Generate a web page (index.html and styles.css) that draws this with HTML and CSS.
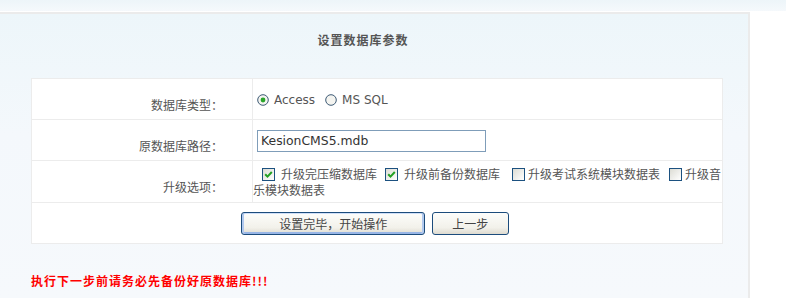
FILE: index.html
```html
<!DOCTYPE html>
<html lang="zh-CN">
  <head>
    <meta charset="UTF-8" />
    <title>设置数据库参数</title>
    <link rel="stylesheet" href="styles.css">
  </head>
  <body>
    <div class="topbar"></div>
    <div class="panel">
      <div class="title">设置数据库参数</div>

      <table class="form">
        <tr>
          <td class="lbl">数据库类型：</td>
          <td class="val">
            <label class="radio"><svg class="rb" width="12" height="12" viewBox="0 0 12 12"><circle cx="6" cy="6" r="5.3" fill="#f4f4f0" stroke="#3d5a75" /><circle cx="6" cy="6" r="2.4" fill="#2aa52a" /></svg>Access</label><label class="radio"><svg class="rb" width="12" height="12" viewBox="0 0 12 12"><circle cx="6" cy="6" r="5.3" fill="#f4f4f0" stroke="#3d5a75" /></svg>MS SQL</label>
          </td>
        </tr>
        <tr>
          <td class="lbl">原数据库路径：</td>
          <td class="val">
            <input class="path" type="text" value="KesionCMS5.mdb" />
          </td>
        </tr>
        <tr>
          <td class="lbl">升级选项：</td>
          <td class="val opts"><label class="opt first"><span class="cb on"><svg width="11" height="11" viewBox="0 0 11 11"><path d="M2.2 5.2 L4.5 7.6 L8.8 3" fill="none" stroke="#22a022" stroke-width="2" /></svg></span>升级完压缩数据库</label><label class="opt"><span class="cb on"><svg width="11" height="11" viewBox="0 0 11 11"><path d="M2.2 5.2 L4.5 7.6 L8.8 3" fill="none" stroke="#22a022" stroke-width="2" /></svg></span>升级前备份数据库</label><label class="opt wide"><span class="cb"></span>升级考试系统模块数据表</label><label class="opt"><span class="cb"></span>升级音乐模块数据表</label></td>
        </tr>
        <tr>
          <td class="btns" colspan="2">
            <button class="btn start">设置完毕，开始操作</button>
            <button class="btn prev">上一步</button>
          </td>
        </tr>
      </table>

      <p class="warn">执行下一步前请务必先备份好原数据库!!!</p>
    </div>
  </body>
</html>
```

FILE: styles.css
```css
body {
  margin: 0;
  background: #fff;
  color: #555;
  font-family: "Noto Sans CJK SC", sans-serif;
  font-size: 12px;
}

.topbar {
  height: 11px;
  background: linear-gradient(#edf5f9, #f5f9fc);
  margin-bottom: 1px;
}

.panel {
  width: 748px;
  height: 284px;
  overflow: hidden;
  border-top: 2px solid #ebebeb;
  border-right: 2px solid #ebebeb;
  background: linear-gradient(#edf6fa, #f4f8fc 120px, #f6f9fc);
}

.title {
  width: 726px;
  padding-top: 16px;
  line-height: 20px;
  text-align: center;
  font-weight: bold;
  letter-spacing: 1px;
  color: #555;
}

.form {
  margin: 28px 0 0 31px;
  width: 692px;
  border-collapse: collapse;
  background: #fff;
}

.form td {
  height: 40px;
  padding: 0;
  border: 1px solid #ececec;
}

.lbl {
  width: 221px;
  padding: 10px 29px 0 0 !important;
  text-align: right;
  vertical-align: middle;
  box-sizing: border-box;
}

.val {
  vertical-align: middle;
}

.radio {
  display: inline-flex;
  align-items: center;
  margin-top: 3px;
  font-family: "DejaVu Sans", sans-serif;
}

.rb {
  margin: 0 5px 0 4px;
}

.radio + .radio .rb {
  margin-left: 10px;
}

.path {
  margin: 1px 0 0 4px;
  width: 229px;
  height: 22px;
  box-sizing: border-box;
  border: 1px solid #7f9db9;
  padding: 0 3px;
  font-family: "DejaVu Sans", sans-serif;
  font-size: 12.4px;
  color: #333;
  outline: none;
}

.opts {
  line-height: 16px;
  padding-top: 1px !important;
}

.cb {
  display: inline-block;
  width: 11px;
  height: 11px;
  border: 1px solid #1c5180;
  background: linear-gradient(135deg, #dcdcd4, #fff);
  vertical-align: -2px;
  margin: 0 6px 0 8px;
}

.cb svg {
  display: block;
}

.opt.first .cb {
  margin-left: 9px;
}

.opt.wide .cb {
  margin: 0 3px 0 12px;
}

.opt:last-child .cb {
  margin: 0 3px 0 9px;
}

.btns {
  text-align: center;
  padding-right: 4px !important;
}

.btn {
  height: 23px;
  margin: 0 2px;
  padding: 0;
  border: 1px solid #1c4c7c;
  border-radius: 3px;
  background: linear-gradient(#fdfdfb, #f2f1ea 70%, #dedbd0);
  font-family: "Noto Sans CJK SC", sans-serif;
  font-size: 12px;
  color: #444;
  vertical-align: middle;
}

.start {
  width: 184px;
  box-shadow: inset 2px 0 #b2c9ee, inset -2px 0 #b2c9ee, inset 0 -2px #97b5e6, inset 0 1px #cfdff8;
}

.prev {
  width: 77px;
}

.warn {
  margin: 29px 0 0 31px;
  line-height: 16px;
  color: #f00;
  font-weight: bold;
  letter-spacing: 1px;
}
```
